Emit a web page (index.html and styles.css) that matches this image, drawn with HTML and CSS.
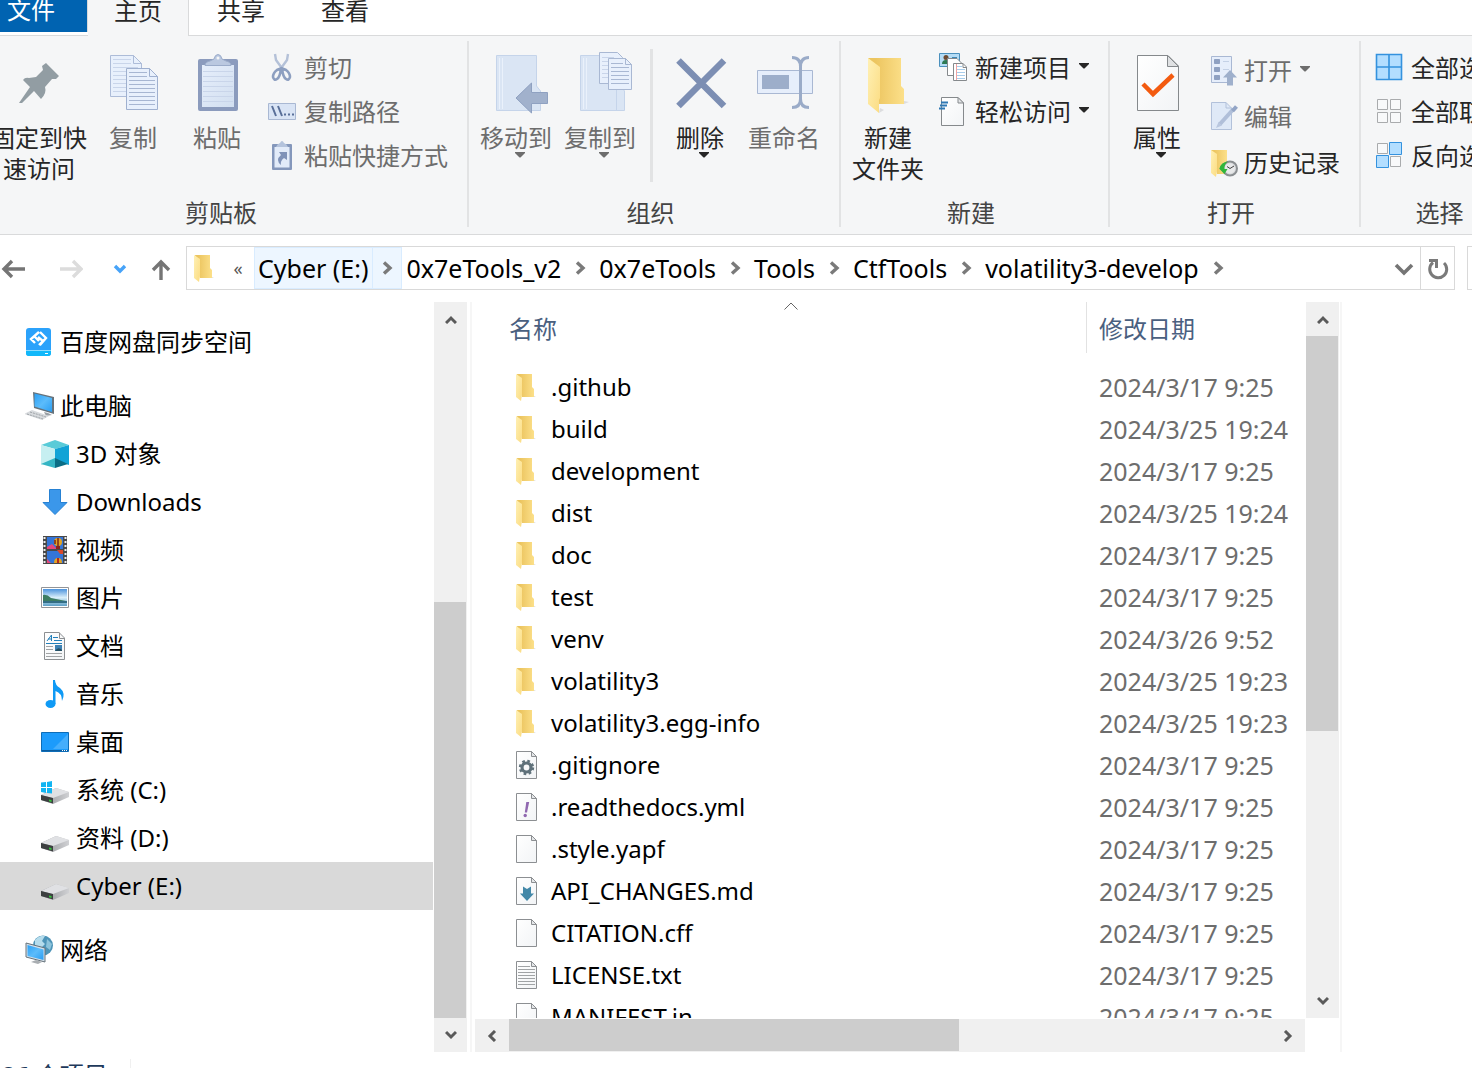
FILE: index.html
```html
<!DOCTYPE html>
<html lang="zh-CN">
<head>
  <meta charset="UTF-8">
  <meta name="viewport" content="width=device-width, initial-scale=1.0">
  <title>volatility3-develop</title>
  <link rel="stylesheet" href="styles.css">
</head>
<body>

  <!-- Shared icons -->
  <svg class="sprite" aria-hidden="true">
    <defs>
      <linearGradient id="gFolder" x1="0" y1="0" x2="1" y2="0">
        <stop offset="0.2" stop-color="#ecc560"/><stop offset="1" stop-color="#fce08a"/>
      </linearGradient>
      <linearGradient id="gFlap" x1="0" y1="0" x2="1" y2="1">
        <stop offset="0" stop-color="#fff0b4"/><stop offset="1" stop-color="#fbdc82"/>
      </linearGradient>
      <linearGradient id="gPale" x1="0" y1="0" x2="1" y2="1">
        <stop offset="0" stop-color="#e6eefb"/><stop offset="1" stop-color="#d2dff0"/>
      </linearGradient>
      <linearGradient id="gPaper" x1="0" y1="0" x2="1" y2="1">
        <stop offset="0" stop-color="#ffffff"/><stop offset="1" stop-color="#f2f4f6"/>
      </linearGradient>
      <linearGradient id="gScreen" x1="0" y1="0" x2="1" y2="1">
        <stop offset="0" stop-color="#2ba0f5"/><stop offset="0.5" stop-color="#5cbcfb"/><stop offset="1" stop-color="#2a9df2"/>
      </linearGradient>
      <linearGradient id="gSky" x1="0" y1="0" x2="0" y2="1">
        <stop offset="0" stop-color="#4c93dc"/><stop offset="0.5" stop-color="#d9effa"/><stop offset="1" stop-color="#5c9fc6"/>
      </linearGradient>
      <linearGradient id="gDrive" x1="0" y1="0" x2="1" y2="0">
        <stop offset="0" stop-color="#8f9194"/><stop offset="1" stop-color="#d0d1d4"/>
      </linearGradient>
    </defs>

    <symbol id="folder" viewBox="0 0 22 28">
      <path d="M1 1H16V14L18 16V24H6Z" fill="url(#gFolder)"/>
      <path d="M0 1L6 5V22L5 28L0 24Z" fill="url(#gFlap)"/>
      <path d="M18 24l2 0-2-1z" fill="#ddd"/>
    </symbol>
    <symbol id="file" viewBox="0 0 22 28">
      <path d="M.5.5H15.500L20.500 5.500V27.500H.5Z" fill="url(#gPaper)" stroke="#8c8f92"/>
      <path d="M15.500.5V5.500H20.500Z" fill="#e4e6e8" stroke="#8c8f92"/>
    </symbol>
    <symbol id="file-gear" viewBox="0 0 22 28">
      <use href="#file"/>
      <circle cx="10.500" cy="16.500" r="4.500" fill="none" stroke="#5f717a" stroke-width="3.200"/>
      <circle cx="10.500" cy="16.500" r="6.400" fill="none" stroke="#5f717a" stroke-width="2.600" stroke-dasharray="2.600 2.430"/>
    </symbol>
    <symbol id="file-yml" viewBox="0 0 22 28">
      <use href="#file"/>
      <path d="M10.300 9H13.200L11 19.500H8.800Z" fill="#9068b0"/>
      <circle cx="9.200" cy="22.500" r="1.700" fill="#9068b0"/>
    </symbol>
    <symbol id="file-md" viewBox="0 0 22 28">
      <use href="#file"/>
      <path d="M7 9.500L11 12L15 9.500V16.500H18L11 24L4 16.500H7Z" fill="#4388a8"/>
    </symbol>
    <symbol id="file-text" viewBox="0 0 22 28">
      <use href="#file"/>
      <path d="M2 5.500H14M2 8.500H19M2 11.500H19M2 14.500H19M2 17.500H19M2 20.500H19M2 23.500H19" stroke="#a0a3a5" fill="none"/>
    </symbol>
    <symbol id="drive" viewBox="0 0 30 30">
      <path d="M1 20L16 13L29 17V22L13 29L1 25Z" fill="url(#gDrive)"/>
      <path d="M1 20L16 13L29 17L13 23Z" fill="#e0e1e4"/>
      <path d="M1 20L13 23V28.500L1 25Z" fill="#3c3f40"/>
      <path d="M9 24.500L11.500 25V27L9 26.300Z" fill="#35c53b"/>
    </symbol>
    <symbol id="caret" viewBox="0 0 10 6"><path d="M0 0H10V1L5.500 5.500H4.500L0 1Z" fill="currentColor"/></symbol>
    <symbol id="chevron" viewBox="0 0 12 14"><path d="M2 1.500L8 7L2 12.500" fill="none" stroke="currentColor" stroke-width="3.400"/></symbol>
    <symbol id="sb-up" viewBox="0 0 12 10"><path d="M1 9L6 4L11 9" fill="none" stroke="#5a5a5a" stroke-width="3"/></symbol>
    <symbol id="sb-down" viewBox="0 0 12 10"><path d="M1 2L6 7L11 2" fill="none" stroke="#5a5a5a" stroke-width="3"/></symbol>
    <symbol id="sb-left" viewBox="0 0 10 12"><path d="M8 1L3 6L8 11" fill="none" stroke="#5a5a5a" stroke-width="3"/></symbol>
    <symbol id="sb-right" viewBox="0 0 10 12"><path d="M2 1L7 6L2 11" fill="none" stroke="#5a5a5a" stroke-width="3"/></symbol>
  </svg>

  <div class="explorer">

    <!-- Ribbon tabs -->
    <nav class="tabs">
      <button type="button" class="tab tab-file">文件</button>
      <button type="button" class="tab tab-active">主页</button>
      <button type="button" class="tab">共享</button>
      <button type="button" class="tab">查看</button>
    </nav>

    <!-- Ribbon -->
    <div class="ribbon">
      <section class="group group-clipboard">
        <div class="group-body">
          <button type="button" class="big big-wide">
            <svg class="big-icon" viewBox="0 0 64 72"><path d="M12 53L23 37L16 30Q18 27 22 28L29 27L36 20L35 16L39 13L52 26L49 29L45 29L38 37Q40 43 34 49L27 41L15 53Z" fill="#929da3"/></svg>
            <span>固定到快<br>速访问</span>
          </button>
          <button type="button" class="big" disabled>
            <svg class="big-icon" viewBox="0 0 64 72">
              <g fill="#e8f0fc" stroke="#adbcd8">
                <path d="M9.500 5.500H32.500L40.500 13.500V46.500H9.500Z"/><path d="M32.500 5.500V13.500H40.500Z"/>
                <path d="M12 9.500H30M12 13.500H30M12 17.500H37M12 21.500H37M12 25.500H37M12 29.500H37M12 33.500H37M12 37.500H37M12 41.500H37" stroke="#c9d5ea"/>
                <path d="M25.500 18.500H48.500L56.500 26.500V59.500H25.500Z" stroke="#9fb0cf"/><path d="M48.500 18.500V26.500H56.500Z" stroke="#9fb0cf"/>
                <path d="M28 22.500H46M28 26.500H46M28 30.500H54M28 34.500H54M28 38.500H54M28 42.500H54M28 46.500H54M28 50.500H54M28 54.500H54" stroke="#a7b6d2"/>
              </g>
            </svg>
            <span>复制</span>
          </button>
          <button type="button" class="big" disabled>
            <svg class="big-icon" viewBox="0 0 64 72">
              <rect x="13" y="9" width="40" height="52" rx="2" fill="#8b9bbd"/>
              <path d="M17 15H49V57H17Z" fill="url(#gPale)"/>
              <path d="M18 21.500H48M18 26.500H48M18 31.500H48M18 36.500H48M18 41.500H48M18 46.500H48M18 51.500H48" stroke="#c9d5ea"/>
              <path d="M20 15.500Q20 12 25 11L29 9Q30 4.500 33 4.500T37 9L41 11Q46 12 46 15.500Z" fill="#bac8e0" stroke="#9bacca"/>
              <circle cx="33" cy="8" r="1.500" fill="#f5f6f7"/>
            </svg>
            <span>粘贴</span>
          </button>
          <div class="stack">
            <button type="button" class="small" disabled>
              <svg class="small-icon" viewBox="0 0 30 30">
                <path d="M7 1L8 7L16 18M20 1L19 7L11 18" fill="none" stroke="#b4c1d8" stroke-width="2.400"/>
                <path d="M14 15L9 17Q5 20 5 24Q6 28 9 26Q12 24 13 16M13 15L18 17Q22 20 22 24Q21 28 18 26Q15 24 14 16" fill="none" stroke="#8d9fc0" stroke-width="2.600"/>
              </svg>
              <span>剪切</span>
            </button>
            <button type="button" class="small" disabled>
              <svg class="small-icon" viewBox="0 0 30 30">
                <path d="M.5 6.500H27.500V22.500H.5Z" fill="#d9e4f5" stroke="#a9b8d3"/>
                <path d="M4 9L8 19M10 9L14 19M16 17.500H18M20 17.500H22M24 17.500H26" fill="none" stroke="#596f99" stroke-width="2"/>
              </svg>
              <span>复制路径</span>
            </button>
            <button type="button" class="small" disabled>
              <svg class="small-icon" viewBox="0 0 30 30">
                <rect x="4" y="3" width="20" height="26" rx="1" fill="#8497bb"/>
                <path d="M6.500 6H21.500V26.500H6.500Z" fill="#e2ebf9"/>
                <path d="M8 6Q9 3 12 2Q14-2 16 2Q19 3 20 6Z" fill="#b4c3dc"/>
                <path d="M11 11H19V19L16 17Q12 20 13 24Q7 19 13 14Z" fill="#7f92b8"/>
              </svg>
              <span>粘贴快捷方式</span>
            </button>
          </div>
        </div>
        <h2 class="group-label">剪贴板</h2>
      </section>

      <section class="group group-organize">
        <div class="group-body">
          <button type="button" class="big" disabled>
            <svg class="big-icon" viewBox="0 0 64 72">
              <path d="M12.500 5.500H52.500V36L56.500 41V60.500H12.500Z" fill="#dae5f4" stroke="#c5d4ea"/>
              <path d="M15.500 8V59M18.500 8V59" stroke="#eaf1fb"/>
              <path d="M32 48L47.500 33V42.500H63.500V53.500H47.500V63Z" fill="#a1b1cc" stroke="#8fa1c1"/>
            </svg>
            <span>移动到</span>
            <svg class="caret"><use href="#caret"/></svg>
          </button>
          <button type="button" class="big" disabled>
            <svg class="big-icon" viewBox="0 0 64 72">
              <path d="M12.500 5.500H52.500V36L56.500 41V60.500H12.500Z" fill="#dae5f4" stroke="#c5d4ea"/>
              <path d="M15.500 8V59M18.500 8V59" stroke="#eaf1fb"/><path d="M48.500 40V60" stroke="#c5d4ea"/>
              <g fill="#e8f0fc" stroke="#a9b8d3">
                <path d="M31.500 2.500H49.500L54.500 7.500V33.500H31.500Z"/>
                <path d="M34 7.500H46M34 11.500H52M34 15.500H52M34 19.500H52M34 23.500H52M34 27.500H52" stroke="#c9d5ea"/>
                <path d="M40.500 8.500H57.500L63.500 14.500V39.500H40.500Z"/><path d="M57.500 8.500V14.500H63.500Z"/>
                <path d="M43 13.500H55M43 17.500H61M43 21.500H61M43 25.500H61M43 29.500H61M43 33.500H61"/>
              </g>
            </svg>
            <span>复制到</span>
            <svg class="caret"><use href="#caret"/></svg>
          </button>
          <div class="divider"></div>
          <button type="button" class="big">
            <svg class="big-icon" viewBox="0 0 64 72"><path d="M10.500 10.500L56 56M56 10.500L10.500 56" stroke="#7c8eb3" stroke-width="6.500"/></svg>
            <span>删除</span>
            <svg class="caret"><use href="#caret"/></svg>
          </button>
          <button type="button" class="big" disabled>
            <svg class="big-icon" viewBox="0 0 64 72">
              <path d="M5.500 20.500H60.500V43.500H5.500Z" fill="#e6eefb" stroke="#a9b8d3"/>
              <path d="M10 25H37V39H10Z" fill="#9daeca"/>
              <path d="M40 7.500Q48.500 7.500 48.500 17V49Q48.500 57.500 40 57.500M57 7.500Q48.500 7.500 48.500 17V49Q48.500 57.500 57 57.500" fill="none" stroke="#9aabc8" stroke-width="3"/>
            </svg>
            <span>重命名</span>
          </button>
        </div>
        <h2 class="group-label">组织</h2>
      </section>

      <section class="group group-new">
        <div class="group-body">
          <button type="button" class="big">
            <svg class="big-icon" viewBox="0 0 64 72">
              <path d="M48 54L53 52L48 51ZM23 63L28 60L24 58Z" fill="#dcdddf"/>
              <path d="M12 8H45V36L48 39V54H23Z" fill="url(#gFolder)"/>
              <path d="M12 8L24 17V48L23 50V63L12 54Z" fill="url(#gFlap)"/>
            </svg>
            <span>新建<br>文件夹</span>
          </button>
          <div class="stack">
            <button type="button" class="small">
              <svg class="small-icon" viewBox="0 0 30 30">
                <path d="M.5.5H20.500V13.500H.5Z" fill="#b5dcf5" stroke="#4b90bd"/>
                <circle cx="7" cy="4.500" r="2.500" fill="#6d4b32"/><path d="M3 11Q3 7 7 7T11 11Z" fill="#2d7a54"/><path d="M13 4.500H18" stroke="#3d86b5"/>
                <path d="M8.500 5.500H18L22.500 10V22.500H8.500Z" fill="#fff" stroke="#85898c"/>
                <path d="M14.500 10.500H24L27.500 14V27.500H14.500Z" fill="#fff" stroke="#85898c"/>
                <path d="M24 10.500V14.500H27.500" fill="none" stroke="#85898c"/>
                <path d="M18 13.500H23M18 16.500H26M18 19.500H26M18 22.500H26M18 25.500H26" stroke="#a8cdeb"/><path d="M17.500 11V27" stroke="#f1a3a3"/>
              </svg>
              <span>新建项目</span>
              <svg class="caret"><use href="#caret"/></svg>
            </button>
            <button type="button" class="small">
              <svg class="small-icon" viewBox="-1 0 30 30">
                <path d="M1.500.5H18L23.500 6V28.500H1.500Z" fill="url(#gPaper)" stroke="#85898c"/>
                <path d="M18 .5V6H23.500Z" fill="#e4e6e8" stroke="#85898c"/>
                <path d="M1 5.500H8M0 8.500H7M-1 11.500H5" stroke="#2f78b4" stroke-width="2"/>
              </svg>
              <span>轻松访问</span>
              <svg class="caret"><use href="#caret"/></svg>
            </button>
          </div>
        </div>
        <h2 class="group-label">新建</h2>
      </section>

      <section class="group group-open">
        <div class="group-body">
          <button type="button" class="big">
            <svg class="big-icon" viewBox="0 0 64 72">
              <path d="M12.500 5.500H43L53.500 16V60.500H12.500Z" fill="url(#gPaper)" stroke="#85898c"/>
              <path d="M42.500 5.500V16.500H53.500Z" fill="#dfe1e3" stroke="#85898c"/>
              <path d="M18 34L28 44L48 25" fill="none" stroke="#f35b10" stroke-width="4.500"/>
            </svg>
            <span>属性</span>
            <svg class="caret"><use href="#caret"/></svg>
          </button>
          <div class="stack stack-loose">
            <button type="button" class="small" disabled>
              <svg class="small-icon" viewBox="0 0 30 30">
                <path d="M3.500.5H23.500V26.500H3.500Z" fill="#e6eefb" stroke="#a9b8d3"/>
                <path d="M6.500 3.500H11.500V7.500H6.500ZM6.500 11.500H11.500V15.500H6.500ZM6.500 19.500H11.500V23.500H6.500Z" fill="#8fa1c2" stroke="#8fa1c2"/>
                <path d="M15 5.500H21M15 13.500H21" stroke="#c4d1e6"/>
                <path d="M22 14L29 21.500H25V29.500H19V21.500H15Z" fill="#9fb0cc"/>
              </svg>
              <span>打开</span>
              <svg class="caret"><use href="#caret"/></svg>
            </button>
            <button type="button" class="small" disabled>
              <svg class="small-icon" viewBox="0 0 30 30">
                <path d="M3.500.5H18L23.500 6V27.500H3.500Z" fill="#dfe9f7" stroke="#b2c1da"/>
                <path d="M18 .5V6H23.500" fill="none" stroke="#b2c1da"/>
                <path d="M25.500 7L12 22" stroke="#b0bfd9" stroke-width="4"/><path d="M8 26L10.500 20L14 23.500Z" fill="#b9c7df"/>
                <path d="M28.500 4.500L24.500 9" stroke="#93a5c6" stroke-width="4"/>
              </svg>
              <span>编辑</span>
            </button>
            <button type="button" class="small">
              <svg class="small-icon" viewBox="0 0 30 30">
                <path d="M3 2H19V26H9Z" fill="url(#gFolder)"/><path d="M3 2L9 6V22L8 29L3 25Z" fill="url(#gFlap)"/>
                <circle cx="22" cy="20.500" r="7" fill="#d8dadc" stroke="#8b8f92" stroke-width="2"/>
                <circle cx="22" cy="20.500" r="5" fill="#e8e9ea"/>
                <path d="M19 18.500L22 20.500L26 18" fill="none" stroke="#444"/>
                <path d="M11.500 20.500Q13 14 20 13.500Q16 16 16.500 21H19.500L16.500 26L11 20.500Z" fill="#31b53c"/>
              </svg>
              <span>历史记录</span>
            </button>
          </div>
        </div>
        <h2 class="group-label">打开</h2>
      </section>

      <section class="group group-select">
        <div class="group-body">
          <div class="stack">
            <button type="button" class="small">
              <svg class="small-icon" viewBox="0 0 30 30"><path d="M1.500 1.500H26.500V26.500H1.500ZM14 1.500V26.500M1.500 14H26.500" fill="#b3deff" stroke="#3492de" stroke-width="1.600"/></svg>
              <span>全部选择</span>
            </button>
            <button type="button" class="small">
              <svg class="small-icon" viewBox="0 0 30 30"><path d="M2.500 2.500H12.500V12.500H2.500ZM15.500 2.500H25.500V12.500H15.500ZM2.500 15.500H12.500V25.500H2.500ZM15.500 15.500H25.500V25.500H15.500Z" fill="#f8f9fa" stroke="#a9abad"/></svg>
              <span>全部取消</span>
            </button>
            <button type="button" class="small">
              <svg class="small-icon" viewBox="0 0 30 30"><path d="M2.500 2.500H12.500V12.500H2.500ZM15.500 15.500H25.500V25.500H15.500Z" fill="#f8f9fa" stroke="#a9abad"/><path d="M14.500 1.500H26.500V13.500H14.500ZM1.500 14.500H13.500V26.500H1.500Z" fill="#b3deff" stroke="#3492de"/></svg>
              <span>反向选择</span>
            </button>
          </div>
        </div>
        <h2 class="group-label">选择</h2>
      </section>
    </div>

    <!-- Address bar -->
    <div class="address-row">
      <div class="history">
        <button type="button" aria-label="后退"><svg viewBox="0 0 24 24"><path d="M24 13H4M11 5L3 13L11 21" fill="none" stroke="#757575" stroke-width="3.400"/></svg></button>
        <button type="button" aria-label="前进"><svg viewBox="0 0 24 24"><path d="M1 13H21M14 5L22 13L14 21" fill="none" stroke="#dcdcdc" stroke-width="3.400"/></svg></button>
        <button type="button" aria-label="最近浏览的位置"><svg viewBox="0 0 24 24"><path d="M7 10L12 15L17 10" fill="none" stroke="#47a3f8" stroke-width="3.400"/></svg></button>
        <button type="button" aria-label="上移"><svg viewBox="0 0 24 24"><path d="M12 26V5M4 14L12 6L20 14" fill="none" stroke="#757575" stroke-width="3.400"/></svg></button>
      </div>
      <div class="address">
        <svg class="address-icon"><use href="#folder"/></svg>
        <button type="button" class="overflow">«</button>
        <ol class="crumbs">
          <li class="crumb-hover"><a href="#">Cyber (E:)</a><svg><use href="#chevron"/></svg></li>
          <li><a href="#">0x7eTools_v2</a><svg><use href="#chevron"/></svg></li>
          <li><a href="#">0x7eTools</a><svg><use href="#chevron"/></svg></li>
          <li><a href="#">Tools</a><svg><use href="#chevron"/></svg></li>
          <li><a href="#">CtfTools</a><svg><use href="#chevron"/></svg></li>
          <li><a href="#">volatility3-develop</a><svg><use href="#chevron"/></svg></li>
        </ol>
        <button type="button" class="address-btn" aria-label="以前的位置"><svg viewBox="0 0 24 24"><path d="M4 9L12 17L20 9" fill="none" stroke="#757575" stroke-width="3.600"/></svg></button>
        <button type="button" class="address-btn refresh" aria-label="刷新"><svg viewBox="0 0 24 24"><path d="M18 7A8.500 8.500 0 1 1 7 6.500" fill="none" stroke="#7a7a7a" stroke-width="3"/><path d="M3 4.500H10.500V12" fill="none" stroke="#7a7a7a" stroke-width="3"/></svg></button>
      </div>
      <input type="search" class="search" aria-label="搜索">
    </div>

    <main class="panes">
      <!-- Navigation pane -->
      <nav class="tree">
        <a href="#" class="node root"><svg viewBox="0 0 30 30">
          <rect x="1" y="1" width="25" height="28" rx="3" fill="#2ba2fb"/><path d="M1 24H26V26Q26 29 23 29H4Q1 29 1 26Z" fill="#11b8fa"/><path d="M1 23.500H26" stroke="#8bdcff"/><path d="M20 26.500H23" stroke="#fff"/>
          <path d="M14 5L6 12L10 16M13 10L18 14L14 18M15 5L21 11L15 18M10 10L14 14" fill="none" stroke="#fff" stroke-width="2.400"/></svg>百度网盘同步空间</a>
        <a href="#" class="node root spaced"><svg viewBox="0 0 30 30">
          <path d="M8 1L29 6V23L9 17Z" fill="#66727b"/><path d="M9.500 2.500L27 7V21L9.500 15.500Z" fill="url(#gScreen)"/>
          <path d="M19 21L23 22L27 24L21 25Z" fill="#9aa0a5"/><path d="M-1 23L7 19L24 25L17 29Z" fill="#d7dadd"/><path d="M2 23L18 28M5 21L21 26" stroke="#9fa4a8" stroke-dasharray="2 1"/></svg>此电脑</a>
        <a href="#" class="node"><svg viewBox="0 0 30 30">
          <path d="M1 6L15 1L29 6L15 10Z" fill="#59cbd8"/><path d="M1 6L15 10V21L1 26Z" fill="#c6eff1"/><path d="M29 6L15 10V21L29 26Z" fill="#12a3d6"/>
          <path d="M15 19L1 25L15 29Z" fill="#35b5c4"/><path d="M15 19L28 25L15 29Z" fill="#0b6d85"/></svg>3D 对象</a>
        <a href="#" class="node"><svg viewBox="0 0 30 30"><path d="M9.500 2.500H20.500V15.500H27L15 27.500L3 15.500H9.500Z" fill="#3b97ea" stroke="#2681d3"/></svg>Downloads</a>
        <a href="#" class="node"><svg viewBox="0 0 30 30">
          <path d="M3 1H27V29H3Z" fill="#494949"/><path d="M4.500 2V29M25.500 2V29" stroke="#eee" stroke-width="2" stroke-dasharray="2 2"/>
          <path d="M7 2H23V14H7ZM7 16H23V28H7Z" fill="#3475d8"/><path d="M7 12L12 9L17 14H7Z" fill="#e7477c"/>
          <circle cx="18" cy="7" r="4" fill="#e4a322"/><path d="M18 3V11M15 5V9" stroke="#7a2818" stroke-width="1.500"/><path d="M16 11H20V14H16Z" fill="#8b231c"/>
          <path d="M17 15H23V19H20Z" fill="#d9482b"/><path d="M14 28Q14 23 18 23T22 28Z" fill="#e4a322"/><path d="M18 23V28" stroke="#b42a1e" stroke-width="2"/><path d="M7 24L11 28H7Z" fill="#e7477c"/></svg>视频</a>
        <a href="#" class="node"><svg viewBox="0 0 30 30">
          <path d="M1.500 4.500H28.500V24.500H1.500Z" fill="#fff" stroke="#929497"/><path d="M3 6H27V23H3Z" fill="url(#gSky)"/>
          <path d="M3 12Q7 11 11 15L26 18H3Z" fill="#3d7d62"/><path d="M3 18H27V20H3Z" fill="#336e85"/></svg>图片</a>
        <a href="#" class="node"><svg viewBox="0 0 30 30">
          <path d="M4.500 1.500H19L24.500 7V28.500H4.500Z" fill="url(#gPaper)" stroke="#8c8f92"/><path d="M19.500 1.500V7.500H24.500" fill="none" stroke="#8c8f92"/>
          <path d="M7 10L11.500 4V10M8 8H12M13 6.500H18M14 9.500H22M6 12.500H22" fill="none" stroke="#2280bb"/><path d="M15 14H22V20H15Z" fill="#3d81b3"/><path d="M15 20Q18 15 22 19V20Z" fill="#234e63"/>
          <path d="M6 15.500H13M6 18.500H13M6 22.500H22M6 25.500H22" stroke="#a0a3a5"/></svg>文档</a>
        <a href="#" class="node"><svg viewBox="0 0 30 30"><ellipse cx="10.500" cy="25" rx="5" ry="4" fill="#0f9af5"/><path d="M13 1H15Q15 6 20 9Q26 14 22 22Q22 14 15.500 12V25H13Z" fill="#0f9af5"/></svg>音乐</a>
        <a href="#" class="node"><svg viewBox="0 0 30 30"><path d="M1.500 5.500H28.500V24.500H1.500Z" fill="#1c9bfb" stroke="#0d6db8"/><path d="M13 22L28 7V22Z" fill="#45aefc"/><path d="M2 23.500H28" stroke="#0a5b9d"/><path d="M22 23.500H28" stroke="#fff" stroke-dasharray="1 1"/></svg>桌面</a>
        <a href="#" class="node"><svg viewBox="0 0 30 30"><use href="#drive"/><path d="M1 7.500L6 7V12H1ZM7 7L12 6V12H7ZM1 13H6V18L1 17ZM7 13H12V18.500L7 18Z" fill="#12b5f2"/></svg>系统 (C:)</a>
        <a href="#" class="node"><svg viewBox="0 0 30 30"><use href="#drive"/></svg>资料 (D:)</a>
        <a href="#" class="node selected"><svg viewBox="0 0 30 30"><use href="#drive"/></svg>Cyber (E:)</a>
        <a href="#" class="node root spaced"><svg viewBox="0 0 30 30">
          <circle cx="18" cy="10.500" r="10" fill="#4d94b8"/><path d="M10 5Q15 0 20 1L17 6L20 9L15 14L10 11Z" fill="#b5dcec"/><path d="M22 4L27 9L25 15L21 12Z" fill="#8cc3db"/>
          <path d="M1 8L20 13V27L1 22Z" fill="#d3e0ea" stroke="#66727b"/><path d="M2.500 10L18.500 14.500V25L2.500 21Z" fill="url(#gScreen)"/><path d="M6 27L11 25L17 27L13 29Z" fill="#a9aeb2"/></svg>网络</a>
      </nav>
      <div class="scrollbar scrollbar-tree">
        <button type="button" aria-label="向上滚动"><svg class="sb-v"><use href="#sb-up"/></svg></button>
        <div class="track"><div class="thumb"></div></div>
        <button type="button" aria-label="向下滚动"><svg class="sb-v"><use href="#sb-down"/></svg></button>
      </div>

      <!-- File list -->
      <section class="files">
        <div class="files-view">
          <div class="files-scroll">
            <table>
              <thead>
                <tr>
                  <th class="col-name">名称<svg class="sort" viewBox="0 0 14 8"><path d="M.5 7.500L7 1L13.500 7.500" fill="none" stroke="#666"/></svg></th>
                  <th class="col-date">修改日期</th>
                </tr>
              </thead>
              <tbody>
                <tr><td><svg><use href="#folder"/></svg>.github</td><td>2024/3/17 9:25</td></tr>
                <tr><td><svg><use href="#folder"/></svg>build</td><td>2024/3/25 19:24</td></tr>
                <tr><td><svg><use href="#folder"/></svg>development</td><td>2024/3/17 9:25</td></tr>
                <tr><td><svg><use href="#folder"/></svg>dist</td><td>2024/3/25 19:24</td></tr>
                <tr><td><svg><use href="#folder"/></svg>doc</td><td>2024/3/17 9:25</td></tr>
                <tr><td><svg><use href="#folder"/></svg>test</td><td>2024/3/17 9:25</td></tr>
                <tr><td><svg><use href="#folder"/></svg>venv</td><td>2024/3/26 9:52</td></tr>
                <tr><td><svg><use href="#folder"/></svg>volatility3</td><td>2024/3/25 19:23</td></tr>
                <tr><td><svg><use href="#folder"/></svg>volatility3.egg-info</td><td>2024/3/25 19:23</td></tr>
                <tr><td><svg><use href="#file-gear"/></svg>.gitignore</td><td>2024/3/17 9:25</td></tr>
                <tr><td><svg><use href="#file-yml"/></svg>.readthedocs.yml</td><td>2024/3/17 9:25</td></tr>
                <tr><td><svg><use href="#file"/></svg>.style.yapf</td><td>2024/3/17 9:25</td></tr>
                <tr><td><svg><use href="#file-md"/></svg>API_CHANGES.md</td><td>2024/3/17 9:25</td></tr>
                <tr><td><svg><use href="#file"/></svg>CITATION.cff</td><td>2024/3/17 9:25</td></tr>
                <tr><td><svg><use href="#file-text"/></svg>LICENSE.txt</td><td>2024/3/17 9:25</td></tr>
                <tr><td><svg><use href="#file"/></svg>MANIFEST.in</td><td>2024/3/17 9:25</td></tr>
              </tbody>
            </table>
          </div>
          <div class="scrollbar scrollbar-files">
            <button type="button" aria-label="向上滚动"><svg class="sb-v"><use href="#sb-up"/></svg></button>
            <div class="track"><div class="thumb"></div></div>
            <button type="button" aria-label="向下滚动"><svg class="sb-v"><use href="#sb-down"/></svg></button>
          </div>
        </div>
        <div class="scrollbar scrollbar-bottom">
          <button type="button" aria-label="向左滚动"><svg class="sb-h"><use href="#sb-left"/></svg></button>
          <div class="track"><div class="thumb"></div></div>
          <button type="button" aria-label="向右滚动"><svg class="sb-h"><use href="#sb-right"/></svg></button>
        </div>
      </section>
      <aside class="preview"></aside>
    </main>

    <footer class="status"><span>26 个项目</span></footer>
  </div>

</body>
</html>
```
FILE: styles.css
```css
* {
  box-sizing: border-box;
}

body {
  margin: 0;
  background: #fff;
  color: #000;
  font-family: "Noto Sans", "Noto Sans CJK SC", sans-serif;
  font-size: 24px;
  line-height: 32px;
}

button {
  padding: 0;
  border: 0;
  background: none;
  color: inherit;
  font: inherit;
}

a {
  color: inherit;
  text-decoration: none;
}

svg {
  flex: none;
}

.sprite {
  position: absolute;
  width: 0;
  height: 0;
}

.explorer {
  display: flex;
  flex-direction: column;
  height: 100vh;
  overflow: hidden;
}

/* Tabs */
.tabs {
  display: flex;
  flex: none;
  height: 36px;
  border-bottom: 1px solid #d9dadb;
}

.tab {
  width: 104px;
  height: 36px;
  padding-bottom: 14px;
  line-height: 22px;
  color: #262626;
}

.tab-file {
  width: 88px;
  height: 32px;
  padding: 0 24px 12px 7px;
  border-right: 1px solid #d9dadb;
  line-height: 20px;
  text-align: left;
  background: #0063b1;
  color: #fff;
}

.tab-active {
  width: 101px;
  border: solid #d9dadb;
  border-width: 0 1px 0 0;
  background: #f5f6f7;
}

/* Ribbon */
.ribbon {
  display: flex;
  flex: none;
  height: 199px;
  padding: 5px 0 7px;
  border-bottom: 1px solid #d9dadb;
  background: #f5f6f7;
  color: #262626;
  overflow: hidden;
  white-space: nowrap;
}

.group {
  display: flex;
  flex: none;
  flex-direction: column;
  justify-content: space-between;
  padding-left: 5px;
  border-right: 2px solid #e2e3e4;
}

/* scrolled partly out of the window on the left */
.group-clipboard {
  width: 494px;
  margin-left: -25px;
  padding-left: 16px;
}

.group-organize {
  width: 372px;
}

.group-new {
  width: 269px;
}

.group-open {
  width: 251px;
}

.group-select {
  width: 166px;
}

.group-body {
  display: flex;
  align-items: flex-start;
}

.group-label {
  margin: 0;
  padding-right: 12px;
  font-size: 24px;
  font-weight: 400;
  line-height: 28px;
  text-align: center;
  color: #444;
}

.group-clipboard .group-label {
  padding-right: 16px;
}

.big {
  display: flex;
  flex-direction: column;
  align-items: center;
  width: 84px;
  padding-top: 9px;
  line-height: 31px;
}

.big-wide {
  width: 96px;
  margin-right: 4px;
}

.big-icon {
  width: 64px;
  height: 72px;
}

.caret {
  width: 10px;
  height: 6px;
}

.big .caret {
  margin: -1px 0 0 8px;
}

.big:disabled,
.small:disabled {
  color: #6d6d6d;
}

.divider {
  width: 3px;
  height: 133px;
  margin: 8px 5px 0 8px;
  background: #e2e3e4;
}

.stack {
  display: flex;
  flex-direction: column;
  gap: 12px;
  padding: 11px 0 0 9px;
}

.stack-loose {
  gap: 14px;
  padding-top: 14px;
}

.small {
  display: flex;
  align-items: center;
  gap: 6px;
}

.small-icon {
  width: 30px;
  height: 30px;
}

.small .caret {
  margin: 0 0 4px 2px;
}

/* Address bar */
.address-row {
  display: flex;
  flex: none;
  height: 67px;
  padding: 11px 0 12px;
}

.history {
  display: flex;
  flex: none;
  align-items: center;
  gap: 25px;
  width: 186px;
  padding-left: 1px;
}

.history button,
.history svg {
  display: block;
  width: 24px;
  height: 24px;
}

.history button:nth-child(2) {
  margin-left: 9px;
}

.history button:last-child {
  margin-left: -8px;
}

.address {
  display: flex;
  flex: 1;
  align-items: center;
  min-width: 0;
  border: 1px solid #d9d9d9;
}

.address-icon {
  width: 22px;
  height: 28px;
  margin-left: 7px;
}

.overflow {
  width: 38px;
  padding-left: 6px;
  font-size: 18px;
  color: #555;
}

.crumbs {
  display: flex;
  flex: 1;
  align-self: stretch;
  margin: 0;
  padding: 0;
  font-size: 25px;
  list-style: none;
}

.crumbs li {
  display: flex;
  align-items: center;
  padding: 0 8px 0 4px;
}

.crumbs svg {
  width: 12px;
  height: 14px;
  margin-left: 14px;
  color: #7a7a7a;
}

.crumbs .crumb-hover {
  background: linear-gradient(to left, transparent 29px, #d9ecff 29px, #d9ecff 30px, transparent 30px), #edf6ff;
  box-shadow: inset 0 0 0 1px #d9ecff;
}

.address-btn {
  display: flex;
  align-items: center;
  justify-content: center;
  align-self: stretch;
  width: 32px;
}

.refresh {
  width: 34px;
  border-left: 1px solid #d9d9d9;
}

.address-btn svg {
  width: 24px;
  height: 24px;
}

.search {
  width: 5px;
  margin-left: 12px;
  padding: 0;
  border: 1px solid #d9d9d9;
  border-right: 0;
  border-radius: 0;
  appearance: none;
}

/* Panes */
.panes {
  display: flex;
  flex: 1;
  min-height: 0;
}

.tree {
  flex: none;
  width: 434px;
  padding-top: 16px;
  overflow: hidden;
}

.node {
  display: flex;
  align-items: center;
  gap: 6px;
  height: 48px;
  margin-right: 1px;
  padding-left: 40px;
}

.node svg {
  width: 30px;
  height: 30px;
}

.root {
  gap: 5px;
  padding-left: 25px;
}

.spaced {
  margin-top: 16px;
}

.selected {
  background: #d9d9d9;
}

/* Scrollbars */
.scrollbar {
  display: flex;
  flex: none;
  flex-direction: column;
  width: 33px;
  background: #f0f0f0;
}

.scrollbar button {
  display: flex;
  flex: none;
  align-items: center;
  justify-content: center;
  height: 34px;
}

.sb-v {
  width: 12px;
  height: 10px;
}

.sb-h {
  width: 10px;
  height: 12px;
}

.track {
  display: flex;
  flex: 1;
  flex-direction: column;
}

.thumb {
  margin-right: 1px;
  background: #cdcdcd;
}

.scrollbar-tree .thumb {
  height: 61%;
  margin-top: auto;
}

.scrollbar-files .thumb {
  height: 61%;
}

.scrollbar-bottom {
  flex-direction: row;
  width: auto;
  height: 33px;
  margin: 1px 35px 0 0;
}

.scrollbar-bottom button {
  width: 34px;
}

.scrollbar-bottom .thumb {
  width: 59%;
  height: 32px;
}

/* File list */
.files {
  display: flex;
  flex: 1;
  flex-direction: column;
  min-width: 0;
  margin-left: 3px;
  padding-left: 3px;
  border: solid #f6f6f6;
  border-width: 0 2px;
}

.files-view {
  display: flex;
  flex: 1;
  min-height: 0;
}

.files-scroll {
  flex: 1;
  overflow: hidden;
}

.scrollbar-files {
  margin-right: 1px;
}

table {
  width: 100%;
  border-spacing: 0;
  text-align: left;
}

th {
  position: relative;
  height: 64px;
  padding: 0 0 10px;
  font-weight: 400;
  color: #4a607f;
}

.col-name {
  padding-left: 34px;
  background: linear-gradient(#e2e2e2, #e2e2e2) right top / 1px 51px no-repeat;
}

.col-date {
  width: 219px;
  padding-left: 12px;
}

/* ascending marker above the column title */
.sort {
  position: absolute;
  top: 0;
  left: calc(50% + 3px);
  width: 14px;
  height: 8px;
}

td {
  height: 42px;
  padding: 0 0 0 41px;
}

td svg {
  width: 22px;
  height: 28px;
  margin-right: 13px;
  vertical-align: -5px;
}

td:last-child {
  padding-left: 12px;
  font-size: 25px;
  color: #6d6d6d;
}

.preview {
  flex: none;
  width: 130px;
}

/* Status bar */
.status {
  flex: none;
  height: 16px;
  padding-top: 7px;
  color: #1e395b;
}

.status span {
  display: inline-block;
  padding: 0 22px 0 2px;
  border-right: 1px solid #f0f0f0;
}
```
